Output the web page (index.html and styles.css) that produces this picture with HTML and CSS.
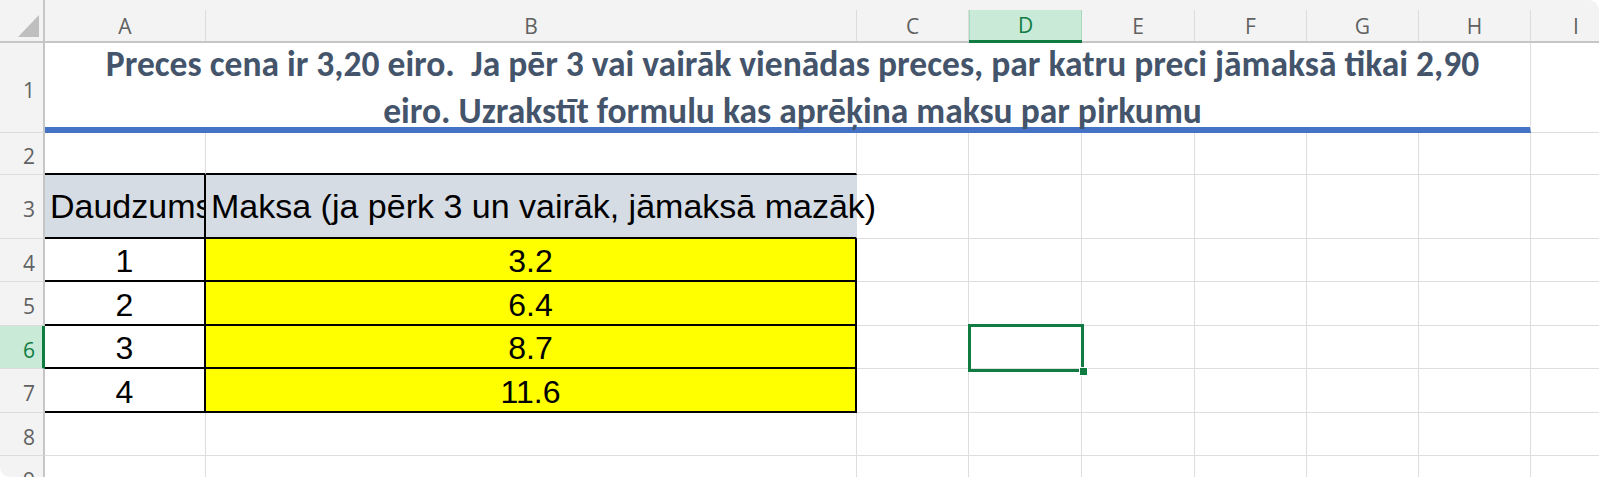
FILE: index.html
```html
<!DOCTYPE html>
<html lang="lv">
<head>
<meta charset="utf-8">
<title>Sheet</title>
<link rel="stylesheet" href="styles.css">
</head>
<body>
<div class="sheet">
  <div class="corner"><svg width="43" height="41" viewBox="0 0 43 41"><polygon points="18,37 39,37 39,15" fill="#bfbfbf"/></svg></div>
  <div class="ch"><span>A</span></div>
  <div class="ch"><span>B</span></div>
  <div class="ch"><span>C</span></div>
  <div class="ch on"><span>D</span></div>
  <div class="ch"><span>E</span></div>
  <div class="ch"><span>F</span></div>
  <div class="ch"><span>G</span></div>
  <div class="ch"><span>H</span></div>
  <div class="ch last"><span>I</span></div>

  <div class="rh">1</div>
  <div class="title">
    <p>Preces cena ir 3,20 eiro.&nbsp; Ja pēr 3 vai vairāk vienādas preces, par katru preci jāmaksā tikai 2,90</p>
    <p>eiro. Uzrakstīt formulu kas aprēķina maksu par pirkumu</p>
  </div>
  <div class="c"></div>

  <div class="rh">2</div>
  <div class="c edge-b"></div><div class="c edge-b"></div>
  <div class="c"></div><div class="c"></div><div class="c"></div><div class="c"></div><div class="c"></div><div class="c"></div><div class="c"></div>

  <div class="rh">3</div>
  <div class="hd hd-a">Daudzums</div>
  <div class="hd hd-b">Maksa (ja pērk 3 un vairāk, jāmaksā mazāk)</div>
  <div class="c"></div><div class="c"></div><div class="c"></div><div class="c"></div><div class="c"></div><div class="c"></div><div class="c"></div>

  <div class="rh">4</div>
  <div class="num">1</div>
  <div class="num val">3.2</div>
  <div class="c"></div><div class="c"></div><div class="c"></div><div class="c"></div><div class="c"></div><div class="c"></div><div class="c"></div>

  <div class="rh">5</div>
  <div class="num">2</div>
  <div class="num val">6.4</div>
  <div class="c"></div><div class="c"></div><div class="c"></div><div class="c"></div><div class="c"></div><div class="c"></div><div class="c"></div>

  <div class="rh on">6</div>
  <div class="num">3</div>
  <div class="num val">8.7</div>
  <div class="c"></div><div class="c sel"></div><div class="c"></div><div class="c"></div><div class="c"></div><div class="c"></div><div class="c"></div>

  <div class="rh">7</div>
  <div class="num">4</div>
  <div class="num val">11.6</div>
  <div class="c"></div><div class="c"></div><div class="c"></div><div class="c"></div><div class="c"></div><div class="c"></div><div class="c"></div>

  <div class="rh">8</div>
  <div class="c"></div><div class="c"></div><div class="c"></div><div class="c"></div><div class="c"></div><div class="c"></div><div class="c"></div><div class="c"></div><div class="c"></div>

  <div class="rh">9</div>
  <div class="c"></div><div class="c"></div><div class="c"></div><div class="c"></div><div class="c"></div><div class="c"></div><div class="c"></div><div class="c"></div><div class="c"></div>
</div>
</body>
</html>
```

FILE: styles.css
```css
html, body {
  margin: 0;
  padding: 0;
  background: #ffffff;
}

.sheet {
  display: grid;
  grid-template-columns: 45px 161px 651px 112px 113px 113px 112px 112px 112px 90px;
  grid-template-rows: 43px 90px 42px 64px 43px 44px 43px 44px 43px 43px;
  width: 1599px;
  height: 477px;
  overflow: hidden;
  background: #ffffff;
  border-top-right-radius: 10px;
  border-bottom-left-radius: 10px;
}

.corner {
  background: #f3f3f3;
  border-right: 2px solid #c6c6c6;
  border-bottom: 2px solid #c6c6c6;
}
.corner svg { display: block; }

.ch {
  background: #f3f3f3;
  border-bottom: 2px solid #c6c6c6;
  display: flex;
}
.ch span {
  flex: 1;
  margin-top: 10px;
  border-right: 1px solid #dcdcdc;
  display: flex;
  align-items: center;
  justify-content: center;
  font-family: "Open Sans", sans-serif;
  font-size: 21px;
  color: #616161;
}
.ch.last span { border-right: none; }
.ch.on { border-bottom: 3px solid #107c41; }
.ch.on span {
  background: #caead8;
  color: #107c41;
  border-left: 1px solid #a6d8bb;
  border-right-color: #a6d8bb;
}

.rh {
  background: #f3f3f3;
  border-right: 2px solid #c6c6c6;
  border-bottom: 1px solid #dcdcdc;
  display: flex;
  align-items: center;
  justify-content: flex-end;
  padding: 5px 8px 0 0;
  font-family: "Open Sans", sans-serif;
  font-size: 21px;
  color: #616161;
}
.rh.on {
  background: #caead8;
  color: #107c41;
  border-right: 3px solid #107c41;
  padding-right: 7px;
}

.c {
  border-right: 1px solid #dedede;
  border-bottom: 1px solid #dedede;
}
.edge-b { border-bottom: 2px solid #000000; }

.title {
  grid-column: 2 / 10;
  border-right: 1px solid #dedede;
  border-bottom: 6px solid #4472c4;
  display: flex;
  flex-direction: column;
  justify-content: center;
  align-items: center;
  padding: 6px 0 0 10px;
  font-family: Carlito, "Open Sans", sans-serif;
  font-weight: 700;
  font-size: 35.5px;
  font-stretch: 75%;
  color: #44546a;
}
.title p {
  margin: 0;
  line-height: 47px;
  white-space: nowrap;
}

.hd {
  background: #d6dce4;
  border-bottom: 2px solid #000000;
  display: flex;
  align-items: center;
  padding-left: 5px;
  font-family: "Liberation Sans", Arial, sans-serif;
  font-size: 34px;
  color: #000000;
  white-space: nowrap;
}
.hd-a {
  border-right: 2px solid #000000;
  overflow: hidden;
}
.hd-b { border-right: 1px solid #d6dce4; }

.num {
  border-right: 2px solid #000000;
  border-bottom: 2px solid #000000;
  display: flex;
  align-items: flex-end;
  justify-content: center;
  font-family: "Liberation Sans", Arial, sans-serif;
  font-size: 32px;
  color: #000000;
}
.val { background: #ffff00; }

.sel { position: relative; }
.sel::before {
  content: "";
  position: absolute;
  left: -1px;
  top: -2px;
  right: -3px;
  bottom: -4px;
  border: 3px solid #107c41;
}
.sel::after {
  content: "";
  position: absolute;
  left: 110px;
  top: 41px;
  width: 7px;
  height: 7px;
  background: #107c41;
  border: 1px solid #ffffff;
}
```
